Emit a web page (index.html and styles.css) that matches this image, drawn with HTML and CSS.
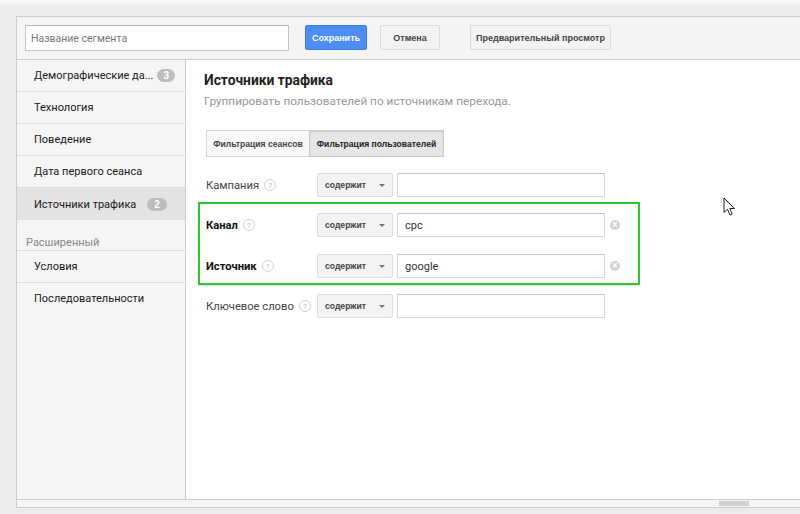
FILE: index.html
```html
<!DOCTYPE html>
<html lang="ru">
<head>
    <meta charset="UTF-8">
    <meta name="viewport" content="width=device-width, initial-scale=1.0">
    <title>Сегмент</title>
    <link rel="stylesheet" href="styles.css">
</head>
<body>
    <div class="topbar"></div>
    <div class="page">
        <div class="panel">
            <div class="header">
                <input type="text" class="name-input" placeholder="Название сегмента">
                <button class="btn btn-primary">Сохранить</button>
                <button class="btn btn-cancel">Отмена</button>
                <button class="btn btn-preview">Предварительный просмотр</button>
            </div>
            <div class="main">
                <aside class="sidebar">
                    <div class="nav-item">
                        <span class="nav-label">Демографические да...</span>
                        <span class="badge">3</span>
                    </div>
                    <div class="nav-item">Технология</div>
                    <div class="nav-item">Поведение</div>
                    <div class="nav-item">Дата первого сеанса</div>
                    <div class="nav-item selected">
                        <span class="nav-label">Источники трафика</span>
                        <span class="badge badge-sel">2</span>
                    </div>
                    <div class="nav-group">Расширенный</div>
                    <div class="nav-item">Условия</div>
                    <div class="nav-item last">Последовательности</div>
                </aside>
                <section class="content">
                    <h2 class="title">Источники трафика</h2>
                    <p class="subtitle">Группировать пользователей по источникам перехода.</p>
                    <div class="tabs">
                        <button class="tab">Фильтрация сеансов</button>
                        <button class="tab active">Фильтрация пользователей</button>
                    </div>
                    <div class="form">
                        <div class="row">
                            <div class="label">Кампания <span class="help">?</span></div>
                            <div class="select">содержит <span class="caret"></span></div>
                            <input type="text" class="value">
                        </div>
                        <div class="highlight">
                            <div class="row">
                                <div class="label bold">Канал <span class="help">?</span></div>
                                <div class="select">содержит <span class="caret"></span></div>
                                <input type="text" class="value" value="cpc">
                                <span class="clear">&times;</span>
                            </div>
                            <div class="row row-gap">
                                <div class="label bold">Источник <span class="help">?</span></div>
                                <div class="select">содержит <span class="caret"></span></div>
                                <input type="text" class="value" value="google">
                                <span class="clear">&times;</span>
                            </div>
                        </div>
                        <div class="row row-last">
                            <div class="label">Ключевое слово <span class="help">?</span></div>
                            <div class="select">содержит <span class="caret"></span></div>
                            <input type="text" class="value">
                        </div>
                    </div>
                    <svg class="cursor" width="13" height="20" viewBox="0 0 13 20">
                        <path d="M1 1 L1 15.5 L4.5 12.3 L7 18 L9.2 17 L6.8 11.5 L11.5 11.5 Z" fill="#fff" stroke="#222" stroke-width="1" stroke-linejoin="round"/>
                    </svg>
                </section>
            </div>
            <div class="hscroll"><div class="thumb"></div></div>
        </div>
    </div>
</body>
</html>
```

FILE: styles.css
```css
body {
    margin: 0;
    background-color: #ebebeb;
    font-family: Roboto, "Liberation Sans", Arial, sans-serif;
    color: #333;
    overflow: hidden;
}
.topbar {
    height: 6px;
    background: linear-gradient(#fbfbfb, #efefef);
}
.page {
    padding: 10px 0 0 16px;
}
.panel {
    width: 784px;
    border: 1px solid #cdcdcd;
    border-right: none;
    background-color: #f4f4f4;
}
.header {
    height: 43px;
    box-sizing: border-box;
    border-bottom: 1px solid #cdcdcd;
    display: flex;
    align-items: flex-start;
    padding: 8px 0 0 8px;
}
.name-input {
    width: 264px;
    height: 26px;
    box-sizing: border-box;
    border: 1px solid #c4c4c4;
    border-top-color: #b9b9b9;
    padding: 0 5px;
    font-family: Roboto, Arial, sans-serif;
    font-size: 10.5px;
    color: #333;
    background: #fff;
    outline: none;
}
.name-input::placeholder {
    color: #777;
}
.btn {
    height: 25px;
    box-sizing: border-box;
    font-family: "Liberation Sans", Arial, sans-serif;
    font-weight: bold;
    font-size: 9px;
    white-space: nowrap;
    border-radius: 2px;
    padding: 0;
    cursor: pointer;
}
.btn-primary {
    margin-left: 16px;
    width: 62px;
    background-color: #4d8ef5;
    border: 1px solid #3b7ee8;
    color: #fff;
}
.btn-cancel {
    margin-left: 13px;
    width: 60px;
    background-color: #f3f3f3;
    border: 1px solid #dadada;
    color: #444;
}
.btn-preview {
    margin-left: 30px;
    width: 141px;
    background-color: #f3f3f3;
    border: 1px solid #dadada;
    color: #444;
}
.main {
    display: flex;
    height: 439px;
    border-bottom: 1px solid #cdcdcd;
}
.sidebar {
    width: 168px;
    background-color: #f5f5f5;
    border-right: 1px solid #cdcdcd;
    font-size: 11px;
    color: #1a1a1a;
}
.nav-item {
    position: relative;
    height: 31px;
    border-bottom: 1px solid #dcdcdc;
    display: flex;
    align-items: center;
    padding-left: 17px;
    padding-right: 8px;
    white-space: nowrap;
}
.nav-item.last {
    border-bottom: none;
}
.nav-label {
    white-space: nowrap;
}
.badge {
    margin-left: 4px;
    background-color: #bdbdbd;
    color: #fff;
    font-family: "Liberation Sans", Arial, sans-serif;
    font-weight: bold;
    font-size: 10px;
    height: 13px;
    line-height: 13px;
    padding: 0 6px;
    border-radius: 7px;
}
.nav-item.selected {
    background-color: #e4e4e4;
    border-bottom: none;
    height: 32px;
}
.badge-sel {
    margin-left: 11px;
    padding: 0 7px;
}
.nav-item.selected::after,
.nav-item.selected::before {
    content: "";
    position: absolute;
    top: 8px;
    border-style: solid;
    border-color: transparent;
}
.nav-item.selected::before {
    right: -9px;
    border-width: 8px 0 8px 8px;
    border-left-color: #c4c4c4;
}
.nav-item.selected::after {
    right: -8px;
    top: 9px;
    border-width: 7px 0 7px 7px;
    border-left-color: #fff;
}
.nav-group {
    height: 31px;
    padding-left: 9px;
    display: flex;
    align-items: flex-end;
    padding-bottom: 1px;
    box-sizing: border-box;
    color: #888;
    font-size: 11px;
    border-bottom: 1px solid #dcdcdc;
}
.content {
    position: relative;
    flex: 1;
    background-color: #fff;
    padding: 11px 0 0 18px;
}
.title {
    margin: 0;
    font-size: 13.8px;
    line-height: 18px;
    font-weight: bold;
    color: #222;
}
.subtitle {
    margin: 4px 0 0;
    font-size: 11.8px;
    line-height: 16px;
    color: #999;
}
.tabs {
    display: flex;
    margin: 21px 0 0 2px;
}
.tab {
    height: 27px;
    box-sizing: border-box;
    border: 1px solid #d6d6d6;
    background-color: #f8f8f8;
    font-family: "Liberation Sans", Arial, sans-serif;
    font-weight: bold;
    font-size: 8.6px;
    white-space: nowrap;
    color: #444;
    padding: 0;
    width: 104px;
}
.tab.active {
    margin-left: -1px;
    width: 135px;
    background-color: #e6e6e6;
    border-color: #cacaca;
    box-shadow: inset 0 1px 2px rgba(0, 0, 0, 0.12);
    color: #222;
}
.form {
    margin: 16px 0 0 2px;
}
.row {
    display: flex;
    align-items: center;
    height: 24px;
}
.row-gap {
    margin-top: 17px;
}
.row-last {
    margin-top: 9px;
}
.label {
    width: 111px;
    font-size: 11.2px;
    color: #444;
    white-space: nowrap;
    display: flex;
    align-items: center;
}
.label.bold {
    font-weight: bold;
    color: #111;
}
.help {
    margin-left: 5px;
    width: 12px;
    height: 12px;
    box-sizing: border-box;
    border: 1px solid #d3d3d3;
    border-radius: 50%;
    font-size: 8px;
    font-weight: normal;
    color: #bcbcbc;
    display: inline-flex;
    align-items: center;
    justify-content: center;
}
.select {
    width: 76px;
    height: 24px;
    box-sizing: border-box;
    background-color: #f3f3f3;
    border: 1px solid #dcdcdc;
    border-radius: 2px;
    font-family: "Liberation Sans", Arial, sans-serif;
    font-weight: bold;
    font-size: 8.6px;
    color: #444;
    display: flex;
    align-items: center;
    padding-left: 7px;
    position: relative;
}
.caret {
    position: absolute;
    right: 7px;
    top: 10px;
    border-left: 3px solid transparent;
    border-right: 3px solid transparent;
    border-top: 3px solid #777;
}
.value {
    margin-left: 4px;
    width: 208px;
    height: 24px;
    box-sizing: border-box;
    border: 1px solid #d6d6d6;
    border-top-color: #c6c6c6;
    padding: 0 7px;
    font-family: Roboto, Arial, sans-serif;
    font-size: 11px;
    color: #333;
    outline: none;
}
.clear {
    margin-left: 5px;
    width: 10px;
    height: 10px;
    border-radius: 50%;
    background-color: #d2d2d2;
    color: #fff;
    font-size: 10px;
    line-height: 10px;
    font-weight: bold;
    text-align: center;
}
.highlight {
    margin: 5px 0 0 -8px;
    width: 442px;
    box-sizing: border-box;
    border: 2px solid #33c233;
    padding: 9px 0 5px 6px;
    box-shadow: 0 1px 2px rgba(0, 0, 0, 0.15);
}
.cursor {
    position: absolute;
    left: 537px;
    top: 137px;
}
.hscroll {
    height: 7px;
    background-color: #f5f5f5;
    position: relative;
}
.thumb {
    position: absolute;
    left: 702px;
    top: 1px;
    width: 30px;
    height: 5px;
    background-color: #d2d2d2;
}
```
